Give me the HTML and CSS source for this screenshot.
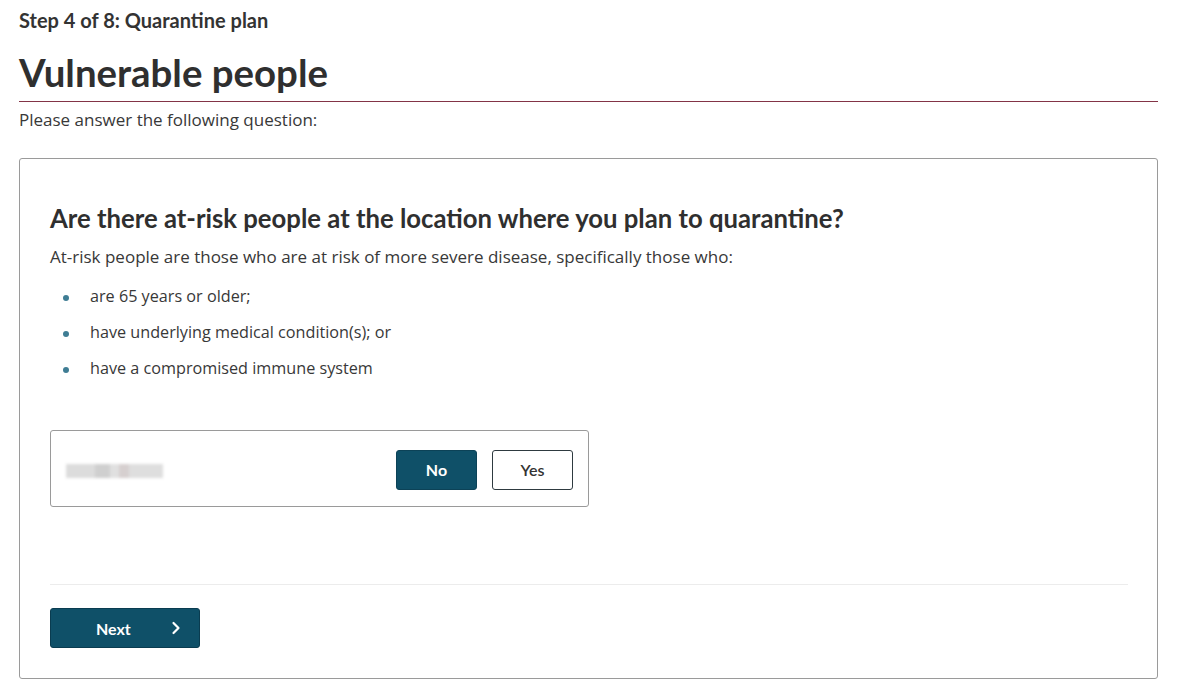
FILE: index.html
```html
<!DOCTYPE html>
<html lang="en">
<head>
<meta charset="utf-8">
<title>Vulnerable people</title>
<link rel="stylesheet" href="styles.css">
</head>
<body>
<div class="page">
  <div class="step">Step 4 of 8: Quarantine plan</div>
  <h1 class="title">Vulnerable people</h1>
  <p class="intro">Please answer the following question:</p>
  <section class="card">
    <h2 class="question">Are there at-risk people at the location where you plan to quarantine?</h2>
    <p class="desc">At-risk people are those who are at risk of more severe disease, specifically those who:</p>
    <ul class="list">
      <li>are 65 years or older;</li>
      <li>have underlying medical condition(s); or</li>
      <li>have a compromised immune system</li>
    </ul>
    <div class="answer">
      <div class="redacted"></div>
      <div class="choices">
        <button class="btn btn-fill">No</button>
        <button class="btn btn-outline">Yes</button>
      </div>
    </div>
    <div class="sep"></div>
    <button class="next">Next
      <svg class="chev" width="10" height="14" viewBox="0 0 10 14"><path d="M2.5 2 L7.5 7 L2.5 12" fill="none" stroke="#fff" stroke-width="2.2" stroke-linecap="round" stroke-linejoin="round"/></svg>
    </button>
  </section>
</div>
</body>
</html>
```
FILE: styles.css
```css
* { box-sizing: border-box; }
html, body { margin: 0; padding: 0; background: #fff; }
body { font-family: "Open Sans", "Noto Sans", sans-serif; color: #333; }
.page { padding: 0 27px 0 19px; }
.step {
  font-family: Lato, sans-serif; font-weight: 700; font-size: 20px;
  color: #333; padding-top: 8px; line-height: 24px;
}
.title {
  font-family: Lato, sans-serif; font-weight: 700; font-size: 38.4px;
  color: #2f2f2f; margin: 18px 0 0; line-height: 44px; padding-bottom: 7px;
  border-bottom: 1px solid #833446;
}
.intro { font-size: 17px; margin: 6px 0 0; line-height: 24px; color: #383838; }
.card {
  margin-top: 26px; border: 1px solid #9a9a9a; border-radius: 3px;
  padding: 42px 30px 31px 30px; height: 521px;
}
.question {
  font-family: Lato, sans-serif; font-weight: 700; font-size: 25.7px;
  color: #2f2f2f; margin: 0; line-height: 34px;
}
.desc { font-size: 17px; margin: 9px 0 0; line-height: 26px; color: #383838; }
.list { list-style: none; margin: 14px 0 0; padding: 0; }
.list li {
  position: relative; padding-left: 40px; font-size: 16.2px; line-height: 24px;
  margin-bottom: 12px; color: #383838;
}
.list li:last-child { margin-bottom: 0; }
.list li::before {
  content: ""; position: absolute; left: 13px; top: 11px; width: 6px; height: 6px;
  border-radius: 50%; background: #3f7d94;
}
.answer {
  margin-top: 50px; width: 539px; height: 77px; border: 1px solid #9a9a9a;
  border-radius: 3px; display: flex; align-items: center; justify-content: space-between;
  padding: 2px 15px 0 15px;
}
.redacted {
  width: 97px; height: 14px; margin-top: 2px; filter: blur(1.5px);
  background: linear-gradient(90deg, #dcdcdc 0 30%, #cfcfcf 30% 45%, #e0e0e0 45% 55%, #d6cfcf 55% 65%, #dedede 65% 100%);
}
.choices { display: flex; gap: 15px; }
.btn {
  width: 81px; height: 40px; border-radius: 3px; font-family: Lato, sans-serif;
  font-weight: 700; font-size: 16px; cursor: pointer;
}
.btn-fill { background: #0f5068; border: 1px solid #0c4257; color: #fff; }
.btn-outline { background: #fff; border: 1px solid #2e3a40; color: #333; font-weight: 600; }
.sep { margin-top: 77px; height: 1px; background: #ececec; width: 1078px; }
.next {
  margin-top: 23px; width: 150px; height: 40px; border-radius: 3px;
  background: #0f5068; border: 1px solid #0a3c50; color: #fff;
  font-family: Lato, sans-serif; font-weight: 700; font-size: 16px;
  display: flex; align-items: center; padding: 0 0 0 45px; gap: 40px;
}
.chev { display: block; }
```
